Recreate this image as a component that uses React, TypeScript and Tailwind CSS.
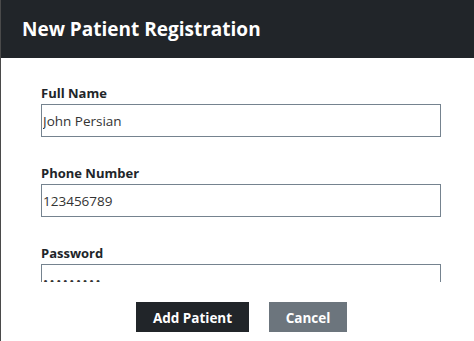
import { useState } from "react";

const font = { fontFamily: '"Open Sans", "Noto Sans", Arial, sans-serif' };

function Field({
  label,
  type = "text",
  value,
  onChange,
}: {
  label: string;
  type?: string;
  value: string;
  onChange: (v: string) => void;
}) {
  return (
    <div className="mb-[27px]">
      <label className="mb-[2px] block h-[18px] text-[13px] leading-[18px] font-bold text-[#212529]">
        {label}
      </label>
      <input
        type={type}
        value={value}
        onChange={(e) => onChange(e.target.value)}
        className={
          type === "password"
            ? "block h-[33px] w-full border border-[#75838f] bg-white px-[1px] text-[13.5px] tracking-[1.5px] text-[#333] outline-none"
            : "block h-[33px] w-full border border-[#75838f] bg-white px-[1px] text-[13.5px] text-[#333] outline-none"
        }
      />
    </div>
  );
}

export default function App() {
  const [name, setName] = useState("John Persian");
  const [phone, setPhone] = useState("123456789");
  const [password, setPassword] = useState("123456789");

  return (
    <div
      className="flex h-[341px] w-[474px] flex-col overflow-hidden border-l border-[#4a4a4a] bg-white"
      style={font}
    >
      <header className="flex h-[58px] shrink-0 items-center bg-[#212529] pl-[21px]">
        <h2 className="text-[19px] font-bold text-white">New Patient Registration</h2>
      </header>

      <div className="h-[224px] shrink-0 overflow-hidden pt-[26px] pr-[33px] pl-[40px]">
        <Field label="Full Name" value={name} onChange={setName} />
        <Field label="Phone Number" value={phone} onChange={setPhone} />
        <Field label="Password" type="password" value={password} onChange={setPassword} />
      </div>

      <div className="flex justify-center gap-[20px] pt-[20px] pl-[8px]">
        <button
          type="button"
          className="h-[30px] w-[113px] bg-[#212529] pt-[2px] text-[13.5px] font-bold text-white"
        >
          Add Patient
        </button>
        <button
          type="button"
          className="h-[30px] w-[78px] bg-[#6c757d] pt-[2px] text-[13.5px] font-bold text-white"
        >
          Cancel
        </button>
      </div>
    </div>
  );
}
